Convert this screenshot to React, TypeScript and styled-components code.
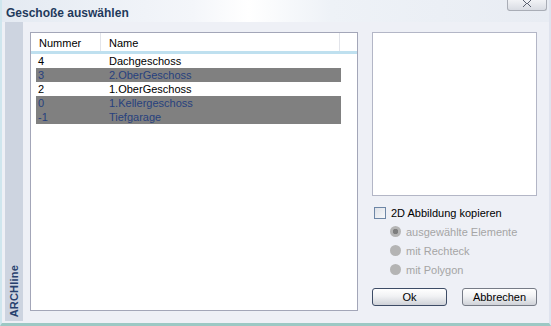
import * as React from 'react';
import styled, { createGlobalStyle } from 'styled-components';

const Global = createGlobalStyle`
  html, body {
    margin: 0;
    padding: 0;
    background: #eef0f6;
  }
  body {
    font-family: "Liberation Sans", Arial, sans-serif;
    font-size: 11px;
  }
`;

/*************************************************************************/

const Window = styled.div`
  width: 551px;
  height: 326px;
  display: flex;
  flex-direction: column;
  background: #eef0f6;
  box-sizing: border-box;
  border-left: 2px solid #cfe6ee;
  border-right: 2px solid #dfe3ee;
  border-bottom: 3px solid #9cc8c4;
  overflow: hidden;
`;

const TitleBar = styled.div`
  height: 22px;
  flex: none;
  display: flex;
  justify-content: space-between;
  align-items: flex-start;
  background: linear-gradient(90deg, #e4eaf2 0%, #f4f6fa 35%, #ffffff 45%, #eef2f7 60%, #e8ecf3 100%);
`;

const Title = styled.div`
  padding: 7px 0 0 4px;
  font-weight: bold;
  font-size: 12px;
  line-height: 12px;
  color: #1f3a5c;
`;

const CloseButton = styled.div`
  width: 40px;
  height: 11px;
  margin-right: 2px;
  box-sizing: border-box;
  border: 1px solid #a9adb6;
  border-top: none;
  border-radius: 0 0 3px 3px;
  background: linear-gradient(#f2f3f6, #d9dce3);
  display: flex;
  justify-content: center;
  align-items: flex-start;
`;

const Body = styled.div`
  flex: 1;
  display: flex;
  min-height: 0;
`;

const Sidebar = styled.div`
  width: 18px;
  margin: 0 7px 2px 3px;
  background: #cdd4e0;
  display: flex;
  align-items: flex-end;
  justify-content: center;
  padding-bottom: 4px;
  box-sizing: border-box;
`;

const Brand = styled.div`
  writing-mode: vertical-rl;
  transform: rotate(180deg);
  font-weight: bold;
  font-size: 11px;
  color: #26406e;
  letter-spacing: 0.2px;
`;

const ListBox = styled.div`
  width: 328px;
  height: 279px;
  margin-top: 10px;
  box-sizing: border-box;
  background: #fff;
  border: 1px solid #a3a6b8;
  display: flex;
  flex-direction: column;
`;

const Header = styled.div`
  height: 18px;
  display: flex;
  border-bottom: 3px solid #bfe0ef;
`;

const HeadCell = styled.div<{ $w: number; $last?: boolean }>`
  width: ${p => p.$w}px;
  flex: none;
  box-sizing: border-box;
  padding: 4px 0 0 8px;
  border-right: ${p => (p.$last ? 'none' : '1px solid #e2e4ea')};
  color: #000;
`;

const Rows = styled.div`
  padding: 0 16px 0 5px;
`;

const Row = styled.div<{ $dim: boolean }>`
  height: 14px;
  display: flex;
  align-items: center;
  background: ${p => (p.$dim ? '#808080' : 'transparent')};
  color: ${p => (p.$dim ? '#27407e' : '#000')};
`;

const NumCell = styled.div`
  width: 71px;
  padding-left: 2px;
`;

const Right = styled.div`
  margin-left: 14px;
  width: 165px;
  padding-top: 10px;
  display: flex;
  flex-direction: column;
`;

const Preview = styled.div`
  height: 164px;
  box-sizing: border-box;
  background: #fff;
  border: 1px solid #b3b6c6;
`;

const CheckRow = styled.label`
  display: flex;
  align-items: center;
  margin-top: 10px;
  padding-left: 2px;
  gap: 5px;
  color: #000;
  height: 14px;
`;

const CheckBox = styled.span`
  width: 12px;
  height: 12px;
  box-sizing: border-box;
  border: 1px solid #6d86a6;
  background: linear-gradient(135deg, #dde1e8, #f7f8fa);
`;

const RadioRow = styled.div`
  display: flex;
  align-items: center;
  gap: 5px;
  height: 19px;
  padding-left: 18px;
  color: #a5a5a5;
`;

const Radio = styled.span<{ $on: boolean }>`
  width: 11px;
  height: 11px;
  border-radius: 50%;
  background: ${p =>
    p.$on
      ? 'radial-gradient(circle, #7d7d7d 0 2.5px, #b4b4b4 3px)'
      : '#b4b4b4'};
`;

const Radios = styled.div`
  margin-top: 2px;
`;

const Buttons = styled.div`
  margin-top: 9px;
  display: flex;
  justify-content: space-between;
`;

const Button = styled.div<{ $default?: boolean }>`
  width: 75px;
  height: 18px;
  box-sizing: border-box;
  border: 1px solid ${p => (p.$default ? '#3d4c66' : '#767b86')};
  border-radius: 3px;
  background: linear-gradient(#ffffff 0%, #f1f2f4 45%, #cfd2d8 100%);
  display: flex;
  align-items: center;
  justify-content: center;
  color: #000;
`;

/*************************************************************************/

const floors = [
  { num: '4', name: 'Dachgeschoss', dim: false },
  { num: '3', name: '2.OberGeschoss', dim: true },
  { num: '2', name: '1.OberGeschoss', dim: false },
  { num: '0', name: '1.Kellergeschoss', dim: true },
  { num: '-1', name: 'Tiefgarage', dim: true }
];

const CloseGlyph = () => (
  <svg width="14" height="8" viewBox="0 0 14 8">
    <path d="M3 0 L7 4 L11 0 M3 7 L7 3 L11 7" stroke="#5a6070" strokeWidth="1" fill="none" />
  </svg>
);

export default function App() {
  return (
    <>
      <Global />
      <Window>
        <TitleBar>
          <Title>Geschoße auswählen</Title>
          <CloseButton>
            <CloseGlyph />
          </CloseButton>
        </TitleBar>
        <Body>
          <Sidebar>
            <Brand>ARCHline</Brand>
          </Sidebar>
          <ListBox>
            <Header>
              <HeadCell $w={70}>Nummer</HeadCell>
              <HeadCell $w={239}>Name</HeadCell>
              <HeadCell $w={17} $last />
            </Header>
            <Rows>
              {floors.map(f => (
                <Row key={f.num} $dim={f.dim}>
                  <NumCell>{f.num}</NumCell>
                  <div>{f.name}</div>
                </Row>
              ))}
            </Rows>
          </ListBox>
          <Right>
            <Preview />
            <CheckRow>
              <CheckBox />
              2D Abbildung kopieren
            </CheckRow>
            <Radios>
              <RadioRow>
                <Radio $on />
                ausgewählte Elemente
              </RadioRow>
              <RadioRow>
                <Radio $on={false} />
                mit Rechteck
              </RadioRow>
              <RadioRow>
                <Radio $on={false} />
                mit Polygon
              </RadioRow>
            </Radios>
            <Buttons>
              <Button $default>Ok</Button>
              <Button>Abbrechen</Button>
            </Buttons>
          </Right>
        </Body>
      </Window>
    </>
  );
}
